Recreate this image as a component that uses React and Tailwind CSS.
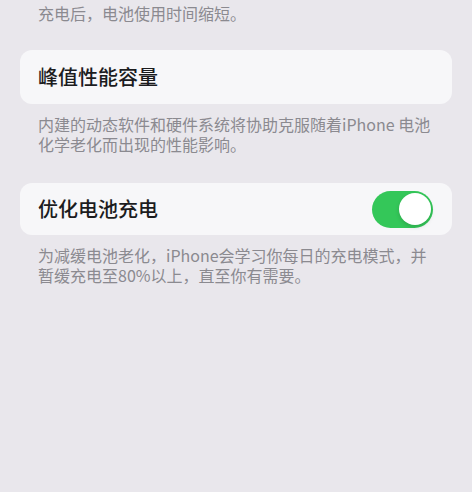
import { useState } from 'react';

const font = { fontFamily: '"Noto Sans CJK SC", "Noto Sans", sans-serif' };

function Toggle({ on, onChange }) {
  return (
    <button
      type="button"
      onClick={() => onChange(!on)}
      className={`relative h-[37px] w-[61px] shrink-0 rounded-full transition-colors ${
        on ? 'bg-[#34c759]' : 'bg-[#e0e0e4]'
      }`}
    >
      <span
        className={`absolute top-[2.5px] h-[32px] w-[32px] rounded-full bg-white shadow-[0_2px_4px_rgba(0,0,0,0.15)] transition-all ${
          on ? 'left-[26.5px]' : 'left-[2.5px]'
        }`}
      />
    </button>
  );
}

function Footnote({ children }) {
  return (
    <p className="px-[38px] text-[16px] leading-[20px] text-[#8b8a90]">
      {children}
    </p>
  );
}

export default function App() {
  const [optimized, setOptimized] = useState(true);

  return (
    <div
      className="min-h-screen w-full bg-[#e9e7ec] pt-[3px] antialiased"
      style={font}
    >
      <Footnote>充电后，电池使用时间缩短。</Footnote>

      <div className="mx-[20px] mt-[27px] flex h-[54px] items-center rounded-[12px] bg-[#f7f7f9] px-[18px]">
        <span className="text-[20px] font-medium text-[#1c1c1e]">峰值性能容量</span>
      </div>

      <div className="mt-[10px]">
        <Footnote>
          内建的动态软件和硬件系统将协助克服随着iPhone 电池化学老化而出现的性能影响。
        </Footnote>
      </div>

      <div className="mx-[20px] mt-[29px] flex h-[52px] items-center justify-between rounded-[12px] bg-[#f7f7f9] pl-[18px] pr-[19px]">
        <span className="text-[20px] font-medium text-[#1c1c1e]">优化电池充电</span>
        <Toggle on={optimized} onChange={setOptimized} />
      </div>

      <div className="mt-[10px]">
        <Footnote>
          为减缓电池老化，iPhone会学习你每日的充电模式，并暂缓充电至80%以上，直至你有需要。
        </Footnote>
      </div>
    </div>
  );
}
